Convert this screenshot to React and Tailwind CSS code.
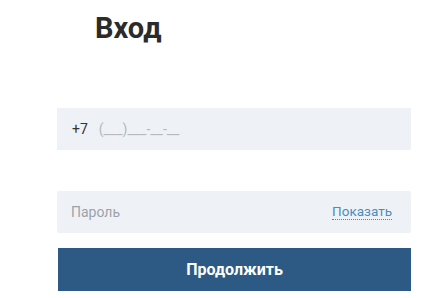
export default function App() {
  return (
    <div className="w-[444px] h-[298px] bg-white font-['Roboto',sans-serif] overflow-hidden">
      <h1 className="pt-[11px] pl-[95px] text-[29px] leading-[35px] font-bold text-[#2b2b2b]">
        Вход
      </h1>

      <form className="mt-[62px] ml-[57px] w-[354px] flex flex-col">
        <div className="h-[42px] bg-[#eef2f6] flex items-center pl-[15px] text-[14px]">
          <span className="text-[#333]">+7</span>
          <span className="ml-[11px] text-[#b5b9be]">(___)___-__-__</span>
        </div>

        <div className="mt-[41px] h-[42px] bg-[#eef2f6] rounded-[2px] flex items-center justify-between pl-[14px] pr-[19px] text-[14px]">
          <span className="text-[#9ca2a9]">Пароль</span>
          <span className="text-[13.5px] text-[#4a8dbd] border-b border-dotted border-[#4a8dbd] leading-[15px]">
            Показать
          </span>
        </div>

        <button
          type="button"
          className="mt-[15px] ml-[1px] h-[43px] bg-[#2c5a84] text-white text-[16px] font-bold"
        >
          Продолжить
        </button>
      </form>
    </div>
  );
}
